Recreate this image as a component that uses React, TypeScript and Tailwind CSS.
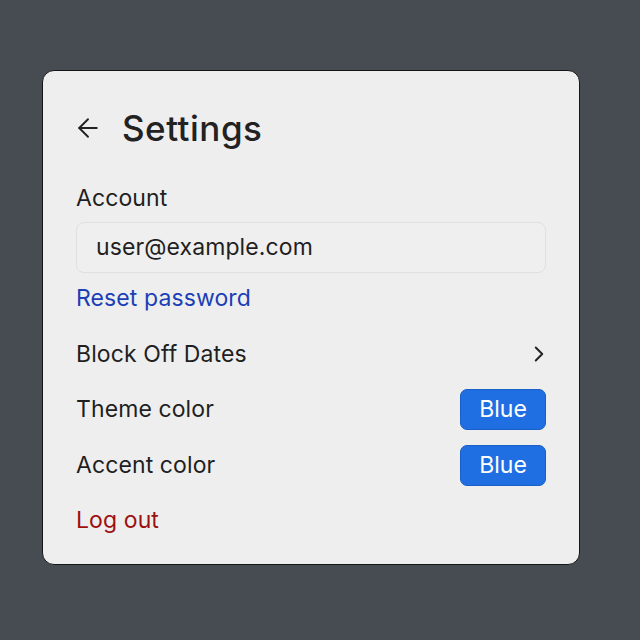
import { ArrowLeft, ChevronRight } from 'lucide-react';

export default function App() {
  return (
    <div
      className="min-h-screen w-full bg-[#474b52] pt-[70px] pl-[42px]"
      style={{ fontFamily: 'Inter, "Noto Sans", sans-serif' }}
    >
      <div className="w-[538px] h-[495px] rounded-[12px] border border-[#151515] bg-[#eeeeee] px-[33px] pt-[36px] text-[#1f1f1f]">
        {/* header */}
        <div className="flex items-center h-[42px]">
          <ArrowLeft className="w-[30px] h-[30px] -ml-[3px] text-[#222]" strokeWidth={1.5} />
          <h1 className="ml-[19px] text-[35px] leading-[42px] font-medium tracking-[0.5px] text-[#222]">
            Settings
          </h1>
        </div>

        {/* account */}
        <div className="mt-[35px] text-[23px] leading-[28px] tracking-[0.1px]">Account</div>
        <div className="mt-[10px] h-[51px] rounded-[8px] border border-[#e0e0e0] bg-[#efefef] flex items-center px-[19px] text-[23px] tracking-[0.1px]">
          user@example.com
        </div>
        <div className="mt-[11px] text-[23px] leading-[28px] tracking-[0.1px] text-[#1c3fb5]">Reset password</div>

        {/* rows */}
        <div className="mt-[28px] flex items-center justify-between h-[28px]">
          <span className="text-[23px] tracking-[0.1px]">Block Off Dates</span>
          <ChevronRight className="w-[26px] h-[26px] -mr-[6px] text-[#222]" strokeWidth={1.8} />
        </div>

        <div className="mt-[21px] flex items-center justify-between">
          <span className="text-[23px] tracking-[0.1px]">Theme color</span>
          <button className="w-[86px] h-[41px] rounded-[7px] bg-[#1f6fe3] border border-[#1a5fc8] text-white text-[23px]">
            Blue
          </button>
        </div>

        <div className="mt-[15px] flex items-center justify-between">
          <span className="text-[23px] tracking-[0.1px]">Accent color</span>
          <button className="w-[86px] h-[41px] rounded-[7px] bg-[#1f6fe3] border border-[#1a5fc8] text-white text-[23px]">
            Blue
          </button>
        </div>

        <div className="mt-[20px] text-[23px] leading-[28px] tracking-[0.1px] text-[#9c1010]">Log out</div>
      </div>
    </div>
  );
}
